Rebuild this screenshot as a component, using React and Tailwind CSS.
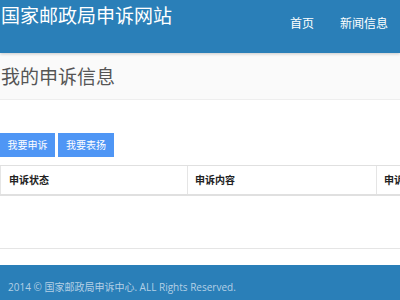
export default function App() {
  const font = { fontFamily: '"Open Sans", "Noto Sans CJK SC", sans-serif' };
  return (
    <div className="w-[400px] h-[300px] overflow-hidden bg-white flex flex-col" style={font}>
      <header className="h-[53px] bg-[#2a7fb8] flex shrink-0 shadow-[0_1px_3px_rgba(0,0,0,0.2)] relative z-10">
        <div className="pl-[1px] pt-[3px] text-[19px] leading-[26px] text-white">国家邮政局申诉网站</div>
        <nav className="ml-auto flex gap-[26px] pt-[15px] pr-[12px] text-[12px] leading-[18px] text-white">
          <span>首页</span>
          <span>新闻信息</span>
        </nav>
      </header>
      <div className="h-[47px] bg-[#fafafa] border-b border-[#eeeeee] flex items-center pl-[1px] pt-[2px] text-[19px] text-[#555]">
        我的申诉信息
      </div>
      <div className="flex gap-[3px] mt-[33px] text-[10px] text-white">
        <span className="w-[55px] h-[24px] bg-[#4f96f5] flex items-center justify-center">我要申诉</span>
        <span className="w-[56px] h-[24px] bg-[#4f96f5] flex items-center justify-center">我要表扬</span>
      </div>
      <div className="mt-[8px] grid grid-cols-[188px_189px_1fr] border-y-2 border-[#e0e0e0] border-t-[1px] h-[31px] text-[10px] font-bold text-[#222]">
        <div className="border-l border-r border-[#e5e5e5] flex items-center pl-[8px]">申诉状态</div>
        <div className="border-r border-[#e5e5e5] flex items-center pl-[7px]">申诉内容</div>
        <div className="flex items-center pl-[7px] whitespace-nowrap overflow-hidden">申诉时间</div>
      </div>
      <div className="mt-[52px] border-t border-[#e5e5e5]"></div>
      <footer className="mt-auto h-[35px] bg-[#2a7fb8] flex items-center pl-[8px] pt-[10px] text-[10px] text-[#b4d0e6]">
        2014 © 国家邮政局申诉中心. ALL Rights Reserved.
      </footer>
    </div>
  );
}
